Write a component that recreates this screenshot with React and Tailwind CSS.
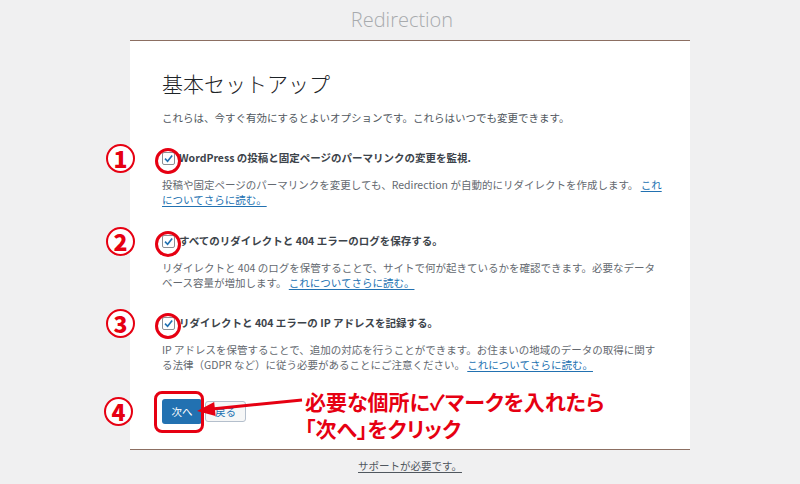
import React from "react";

const RED = "#e60012";

const CircleNum = ({ n, className }) => (
  <span
    className={`absolute w-[29px] h-[29px] rounded-full border-[2.5px] border-[#e60012] bg-white flex items-center justify-center text-[#e60012] text-[23px] font-black leading-none font-['Noto_Sans_CJK_JP',sans-serif] ${className}`}>
    {n}
  </span>
);

const Checkbox = () => (
  <span className="relative shrink-0 w-[13px] h-[13px] border border-[#8c8f94] rounded-[2px] bg-white flex items-center justify-center">
    <svg width="11" height="11" viewBox="0 0 12 12">
      <path d="M2.2 6.2 L5 9 L10 2.8" fill="none" stroke="#2271b1" strokeWidth="1.8" />
    </svg>
    {/* 赤丸の囲み */}
    <span className="absolute left-[-8px] top-[-5px] w-[26px] h-[26px] rounded-full border-[3px] border-[#e60012]" />
  </span>
);

const Link = ({ children }) => (
  <a href="#" className="text-[#2271b1] underline underline-offset-2">
    {children}
  </a>
);

const Option = ({ num, label, lines, className }) => (
  <div className={`relative ${className}`}>
    <CircleNum n={num} className="left-[-56px] top-[-6px]" />
    <label className="flex items-center gap-[4px] h-4 text-[10.5px] font-bold text-[#3c434a]">
      <Checkbox />
      <span className="whitespace-nowrap">{label}</span>
    </label>
    <div className="mt-[11px] text-[10.5px] leading-[15px] text-[#646970]">
      {lines.map((l, i) => (
        <div key={i} className="whitespace-nowrap">
          {l}
        </div>
      ))}
    </div>
  </div>
);

export default function App() {
  return (
    <div className="min-h-[484px] bg-[#f0f0f1] overflow-hidden font-['Noto_Sans_CJK_JP',sans-serif]">
      <div className="h-10 flex items-center justify-center">
        <h1 className="text-[20px] font-light text-[#a7aaad] font-['Open_Sans',sans-serif] ml-1">
          Redirection
        </h1>
      </div>

      <div className="ml-[130px] w-[560px] bg-white border-t border-b border-[#8c6f62] pl-8 pr-7 pt-[27px] pb-[25px]">
        <h2 className="text-[21px] leading-[30px] font-light text-[#1d2327]">基本セットアップ</h2>
        <p className="mt-3 text-[10.5px] leading-4 text-[#50575e]">
          これらは、今すぐ有効にするとよいオプションです。これらはいつでも変更できます。
        </p>

        <Option
          num="1"
          className="mt-6"
          label="WordPress の投稿と固定ページのパーマリンクの変更を監視."
          lines={[
            <>
              投稿や固定ページのパーマリンクを変更しても、Redirection が自動的にリダイレクトを作成します。{" "}
              <Link>これ</Link>
            </>,
            <Link>についてさらに読む。</Link>,
          ]}
        />
        <Option
          num="2"
          className="mt-[26px]"
          label="すべてのリダイレクトと 404 エラーのログを保存する。"
          lines={[
            "リダイレクトと 404 のログを保管することで、サイトで何が起きているかを確認できます。必要なデータ",
            <>
              ベース容量が増加します。 <Link>これについてさらに読む。</Link>
            </>,
          ]}
        />
        <Option
          num="3"
          className="mt-[25px]"
          label="リダイレクトと 404 エラーの IP アドレスを記録する。"
          lines={[
            "IP アドレスを保管することで、追加の対応を行うことができます。お住まいの地域のデータの取得に関す",
            <>
              る法律（GDPR など）に従う必要があることにご注意ください。 <Link>これについてさらに読む。</Link>
            </>,
          ]}
        />

        <div className="relative mt-[27px] flex items-center gap-[3px]">
          <CircleNum n="4" className="left-[-58px] top-[-2px]" />
          <button className="h-[25px] w-[40px] rounded-[3px] bg-[#2271b1] text-white text-[10.5px]">
            次へ
          </button>
          <button className="h-[21px] w-[41px] rounded-[3px] border border-[#b4bfcc] bg-[#f6f7f7] text-[#2271b1] text-[10.5px]">
            戻る
          </button>
          {/* 赤枠 */}
          <span className="absolute left-[-8px] top-[-8px] w-[50px] h-[42px] rounded-[8px] border-[3px] border-[#e60012]" />
          {/* 矢印 */}
          <svg className="absolute left-[28px] top-[-4px]" width="120" height="30" viewBox="0 0 120 30">
            <line x1="22" y1="14" x2="112" y2="5" stroke={RED} strokeWidth="3" />
            <polygon points="7,16 24.2,7.1 25.6,21.1" fill={RED} />
          </svg>
          <div className="absolute left-[143px] top-[-10px] text-[#e60012] text-[21px] font-bold leading-[27px] whitespace-nowrap [font-feature-settings:'palt'] flex flex-col gap-[2px]">
            <div className="h-[25px] leading-[25px]">必要な個所に✓マークを入れたら</div>
            <div className="h-[25px] leading-[25px]">「次へ」をクリック</div>
          </div>
        </div>
      </div>

      <div className="ml-[130px] w-[560px] mt-2 text-center text-[10.5px] leading-4">
        <a href="#" className="text-[#50575e] underline underline-offset-2">
          サポートが必要です。
        </a>
      </div>
    </div>
  );
}
